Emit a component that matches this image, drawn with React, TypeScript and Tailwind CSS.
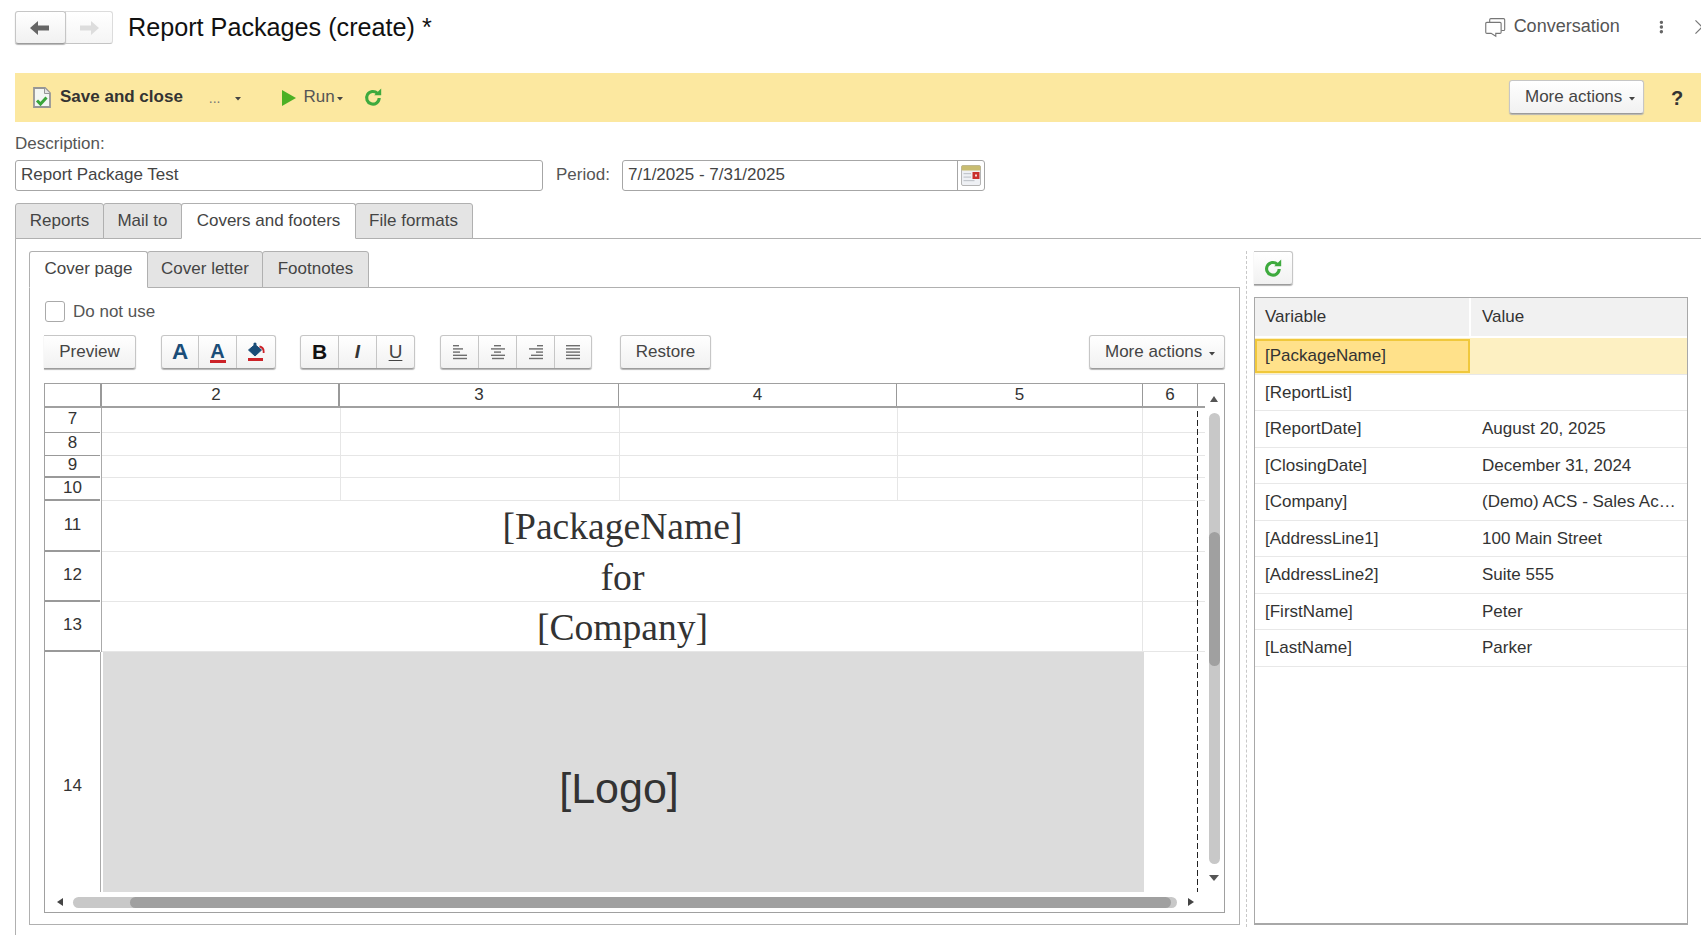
import React from "react";

const btn = "bg-linear-to-b from-white to-[#f1f1f1] border border-[#c6c6c6] border-b-[#9c9c9c] shadow-[0_1px_1px_#b5b5b5] rounded-[3px]";

function Caret({ className = "", color = "#444" }: { className?: string; color?: string }) {
  return (
    <svg width="6" height="4" viewBox="0 0 6 4" className={className}>
      <polygon points="0,0 6,0 3,3.5" fill={color} />
    </svg>
  );
}

function Refresh() {
  return (
    <svg width="18" height="19" viewBox="0 0 18 19">
      <path d="M13.4 5.4A6.3 6.3 0 1 0 15.2 10" fill="none" stroke="#3eaa3e" strokeWidth="3.1" />
      <polygon points="10.2,7.2 17.2,7.2 17.2,0.4" fill="#3eaa3e" />
    </svg>
  );
}

function Align({ lines }: { lines: [number, number][] }) {
  return (
    <svg width="18" height="16" viewBox="0 0 18 16">
      {lines.map(([x, w], i) => (
        <rect key={i} x={x} y={1 + i * 3.2} width={w} height="1.4" fill="#6e6e6e" />
      ))}
    </svg>
  );
}

function Tab({ label, active, w, h }: { label: string; active?: boolean; w: string; h: string }) {
  return (
    <div
      className={`${w} ${h} relative -mb-px flex items-center justify-center rounded-t-[3px] border border-[#b0b0b0] ${
        active ? "border-b-white bg-white z-10" : "bg-[#e4e4e4]"
      } -ml-px first:ml-0`}
    >
      {label}
    </div>
  );
}

const rowHeads = [
  { n: "7", h: "h-[25px]", b: "border-b" },
  { n: "8", h: "h-[22.5px]", b: "border-b" },
  { n: "9", h: "h-[22.5px]", b: "border-b-2" },
  { n: "10", h: "h-[23px]", b: "border-b-2" },
];

function PlainRow({ n, h, b }: { n: string; h: string; b: string }) {
  return (
    <div className={`flex ${h}`}>
      <div className={`w-[55px] ${b} border-[#999] flex items-center justify-center pb-[2px]`}>{n}</div>
      <div className="w-[2px] border-r border-[#aaa]" />
      <div className="flex border-b border-[#e6e6e6] flex-1">
        <div className="w-[239px] border-r border-[#e6e6e6]" />
        <div className="w-[279px] border-r border-[#e6e6e6]" />
        <div className="w-[278px] border-r border-[#e6e6e6]" />
        <div className="w-[245px] border-r border-[#e6e6e6]" />
      </div>
    </div>
  );
}

function BigRow({ n, h, text }: { n: string; h: string; text: string }) {
  return (
    <div className={`flex ${h}`}>
      <div className="w-[55px] border-b-2 border-[#999] flex items-center justify-center pb-[2px]">{n}</div>
      <div className="w-[2px] border-r border-[#aaa]" />
      <div className="flex border-b border-[#e6e6e6] flex-1">
        <div className="w-[1041px] border-r border-[#e6e6e6] flex items-center justify-center [font-family:'Liberation_Serif',serif] text-[37.6px] leading-none pt-[2px] pl-[1px] text-[#333]">
          {text}
        </div>
      </div>
    </div>
  );
}

const vars: [string, string][] = [
  ["[ReportList]", ""],
  ["[ReportDate]", "August 20, 2025"],
  ["[ClosingDate]", "December 31, 2024"],
  ["[Company]", "(Demo) ACS - Sales Ac…"],
  ["[AddressLine1]", "100 Main Street"],
  ["[AddressLine2]", "Suite 555"],
  ["[FirstName]", "Peter"],
  ["[LastName]", "Parker"],
];

export default function App() {
  return (
    <div className="w-[1701px] h-[935px] overflow-hidden bg-white text-[#444] text-[17px] [font-family:'Liberation_Sans',Arial,sans-serif]">
      {/* top */}
      <div className="h-[73px] flex items-start pl-[15px] pt-[11px]">
        <div className="flex h-[33px]">
          <div className={`${btn} w-[51px] h-full flex items-center justify-center pr-[1px] relative z-10`}>
            <svg width="20" height="14" viewBox="0 0 20 14">
              <polygon points="0,7 8,0 8,4.5 19,4.5 19,9.5 8,9.5 8,14" fill="#666" />
            </svg>
          </div>
          <div className="-ml-px w-[48px] h-full flex items-center justify-center bg-linear-to-b from-white to-[#f5f5f5] border border-[#dcdcdc] border-b-[#c4c4c4] rounded-r-[3px]">
            <svg width="20" height="14" viewBox="0 0 20 14">
              <polygon points="20,7 12,0 12,4.5 1,4.5 1,9.5 12,9.5 12,14" fill="#ddd" />
            </svg>
          </div>
        </div>
        <div className="ml-[15px] h-[33px] flex items-center text-[25.2px] text-[#111]">Report Packages (create) *</div>
        <div className="ml-auto h-[32px] flex items-center w-[216px]">
          <svg width="22" height="21" viewBox="0 0 22 21" fill="none" stroke="#777" strokeWidth="1.2">
            <path d="M5 5V2.2Q5 1 6.2 1H19.8Q21 1 21 2.2V12.5Q21 13.7 19.8 13.7H17.4" />
            <path d="M2 5H16Q17.2 5 17.2 6.2V15.5Q17.2 16.7 16 16.7H11.5V19.8L6.5 16.7H2Q0.8 16.7 0.8 15.5V6.2Q0.8 5 2 5Z" />
          </svg>
          <span className="ml-[8px] pb-[2px] text-[18px] text-[#555]">Conversation</span>
          <svg width="5" height="14" viewBox="0 0 5 14" className="ml-[39px]">
            <circle cx="2.5" cy="2" r="1.8" fill="#666" />
            <circle cx="2.5" cy="7" r="1.8" fill="#666" />
            <circle cx="2.5" cy="12" r="1.8" fill="#666" />
          </svg>
          <svg width="6" height="16" viewBox="0 0 6 16" className="ml-[32px]">
            <path d="M0.5 1L7.5 8L0.5 15" fill="none" stroke="#777" strokeWidth="1.3" />
          </svg>
        </div>
      </div>

      {/* yellow bar */}
      <div className="ml-[15px] h-[49px] bg-[#fce8a0] flex items-center pl-[18px] text-[#444]">
        <svg width="18" height="21" viewBox="0 0 18 21">
          <path d="M1 1H12L17 6V20H1Z" fill="#f3f6f3" stroke="#969696" strokeWidth="1.8" />
          <path d="M11.5 1V6.5H17" fill="#e4e4e4" stroke="#969696" strokeWidth="1" />
          <path d="M4 13.5L7.5 17L13.5 10.5" fill="none" stroke="#3aa53a" strokeWidth="3" />
        </svg>
        <span className="ml-[9px] pb-[2px] font-bold text-[#333]">Save and close</span>
        <span className="ml-[26px] text-[#777] text-[14px] pt-[2px]">...</span>
        <Caret className="ml-[14px] mt-[2px]" />
        <svg width="14" height="16" viewBox="0 0 14 16" className="ml-[41px] mt-[1px]">
          <polygon points="0,0 14,8 0,16" fill="#4cb024" />
        </svg>
        <span className="ml-[8px] pb-[2px] text-[#555]">Run</span>
        <Caret className="ml-[2px] mt-[2px]" />
        <div className="ml-[21px] -mt-[1px] flex">
          <Refresh />
        </div>
        <div className={`${btn} ml-auto w-[135px] h-[34px] flex items-center pl-[15px] gap-[7px] -mt-[1px]`}>
          <span>More actions</span>
          <Caret className="mt-[3px]" />
        </div>
        <span className="ml-[27px] mr-[18px] w-[12px] font-bold text-[#333] text-[20px]">?</span>
      </div>

      {/* form */}
      <div className="ml-[15px] mt-[11px] h-[22px] flex items-center text-[#555]">Description:</div>
      <div className="ml-[15px] mt-[5px] flex items-center h-[31px]">
        <div className="w-[528px] h-full border border-[#a6a6a6] rounded-[3px] flex items-center pl-[5px] pb-[1px]">Report Package Test</div>
        <div className="ml-[13px] w-[66px] text-[#555] pb-[1px]">Period:</div>
        <div className="w-[363px] h-full border border-[#a6a6a6] rounded-[3px] flex items-center">
          <div className="w-[335px] h-full border-r border-[#a6a6a6] flex items-center pl-[5px] pb-[1px]">7/1/2025 - 7/31/2025</div>
          <div className="flex-1 flex items-center justify-center">
            <svg width="20" height="21" viewBox="0 0 20 21">
              <rect x="0.5" y="0.5" width="19" height="20" rx="1.5" fill="#eef0f4" stroke="#b5b5b5" />
              <rect x="0.5" y="0.5" width="19" height="5" rx="1" fill="#c8bc70" />
              <rect x="11.5" y="7" width="7" height="7" fill="#c9302c" />
              <rect x="14" y="9.5" width="2" height="2" fill="#f5d6d6" />
              <rect x="2.5" y="8" width="7.5" height="1.2" fill="#c2c6cc" />
              <rect x="2.5" y="11.5" width="7.5" height="1.2" fill="#c2c6cc" />
              <rect x="2.5" y="15" width="11" height="1.2" fill="#c2c6cc" />
            </svg>
          </div>
        </div>
      </div>

      {/* tabs */}
      <div className="ml-[15px] mt-[12px] flex h-[35px]">
        <Tab label="Reports" w="w-[89px]" h="h-[36px]" />
        <Tab label="Mail to" w="w-[79px]" h="h-[36px]" />
        <Tab label="Covers and footers" active w="w-[175px]" h="h-[36px]" />
        <Tab label="File formats" w="w-[118px] pr-[1px]" h="h-[36px]" />
      </div>

      <div className="ml-[15px] h-[697px] border-l border-t border-[#b0b0b0] flex pl-[13px] pt-[12px]">
        {/* left */}
        <div className="w-[1211px] flex flex-col">
          <div className="flex h-[36px]">
            <Tab label="Cover page" active w="w-[119px]" h="h-[37px] pb-[2px]" />
            <Tab label="Cover letter" w="w-[116px]" h="h-[37px] pb-[2px]" />
            <Tab label="Footnotes" w="w-[107px]" h="h-[37px] pb-[2px]" />
          </div>
          <div className="h-[638px] border border-[#b0b0b0] pl-[14px] pr-[14px] pt-[13px]">
            <div className="flex items-center h-[21px] pl-[1px]">
              <div className="w-[20px] h-[21px] border border-[#aaa] rounded-[3px]" />
              <span className="ml-[8px] text-[#555]">Do not use</span>
            </div>
            <div className="mt-[13px] flex h-[34px]">
              <div className={`${btn} border-l-0 rounded-l-none w-[92px] flex items-center justify-center`}>Preview</div>
              <div className={`${btn} ml-[25px] flex w-[115px]`}>
                <div className="w-[37px] flex items-center justify-center border-r border-[#c6c6c6] font-bold text-[22.5px] text-[#1a4d78]">A</div>
                <div className="w-[38px] flex flex-col items-center justify-center border-r border-[#c6c6c6] font-bold text-[20px] leading-[18px] text-[#1a4d78]">
                  A<div className="w-[16px] h-[3px] bg-[#cc2228]" />
                </div>
                <div className="flex-1 flex items-center justify-center">
                  <svg width="18" height="20" viewBox="0 0 18 20">
                    <circle cx="8" cy="2" r="1.6" fill="#1a4d78" />
                    <path d="M8 2.5L14.5 8L8 14L1.5 8Z" fill="#1a4d78" stroke="#1a4d78" strokeLinejoin="round" />
                    <path d="M12.5 4.5Q17.2 5.5 16.6 11" fill="none" stroke="#cc2228" strokeWidth="1.8" />
                    <rect x="1" y="16" width="15" height="3" fill="#cc2228" />
                  </svg>
                </div>
              </div>
              <div className={`${btn} ml-[24px] flex w-[115px] text-[#111]`}>
                <div className="w-[38px] flex items-center justify-center border-r border-[#c6c6c6] font-bold text-[21px]">B</div>
                <div className="w-[38px] flex items-center justify-center border-r border-[#c6c6c6] italic font-bold text-[19px] text-[#333]">I</div>
                <div className="flex-1 flex items-center justify-center underline underline-offset-2 text-[19px] text-[#444]">U</div>
              </div>
              <div className={`${btn} ml-[25px] flex w-[152px]`}>
                <div className="w-[38px] flex items-center justify-center border-r border-[#c6c6c6]">
                  <Align lines={[[2, 6], [2, 10], [2, 7], [2, 14], [2, 14]]} />
                </div>
                <div className="w-[38px] flex items-center justify-center border-r border-[#c6c6c6]">
                  <Align lines={[[5, 7], [2, 14], [5, 7], [2, 14], [3, 12]]} />
                </div>
                <div className="w-[38px] flex items-center justify-center border-r border-[#c6c6c6]">
                  <Align lines={[[10, 6], [2, 14], [9, 7], [4, 12], [2, 14]]} />
                </div>
                <div className="flex-1 flex items-center justify-center">
                  <Align lines={[[2, 14], [2, 14], [2, 14], [2, 14], [2, 14]]} />
                </div>
              </div>
              <div className={`${btn} ml-[28px] w-[91px] flex items-center justify-center`}>Restore</div>
              <div className={`${btn} ml-auto w-[136px] flex items-center pl-[15px] gap-[7px]`}>
                <span>More actions</span>
                <Caret className="mt-[3px]" />
              </div>
            </div>

            {/* grid */}
            <div className="mt-[14px] w-[1181px] h-[530px] border border-[#a0a0a0] flex flex-col text-[#333]">
              <div className="flex h-[508px]">
                <div className="w-[1160px] flex flex-col">
                  <div className="flex h-[24px] border-b-2 border-[#a0a0a0]">
                    <div className="w-[57px] border-r-2 border-[#999]" />
                    <div className="w-[238px] border-r-2 border-[#999] flex items-center justify-center pr-[8px]">2</div>
                    <div className="w-[279px] border-r border-[#999] flex items-center justify-center">3</div>
                    <div className="w-[278px] border-r border-[#999] flex items-center justify-center">4</div>
                    <div className="w-[246px] border-r border-[#999] flex items-center justify-center">5</div>
                    <div className="w-[55px] border-r border-[#999] flex items-center justify-center">6</div>
                  </div>
                  <div className="relative h-[484px] flex flex-col">
                    {rowHeads.map((r) => (
                      <PlainRow key={r.n} {...r} />
                    ))}
                    <BigRow n="11" h="h-[51px]" text="[PackageName]" />
                    <BigRow n="12" h="h-[50px]" text="for" />
                    <BigRow n="13" h="h-[50px]" text="[Company]" />
                    <div className="flex h-[240px]">
                      <div className="w-[55px] flex items-center justify-center pt-[28px]">14</div>
                      <div className="w-[1px] border-r border-[#aaa]" />
                      <div className="ml-[2px] w-[1041px] h-[240px] bg-[#dcdcdc] flex items-center justify-center text-[43px] pr-[9px] pt-[32px] leading-none">
                        [Logo]
                      </div>
                    </div>
                    <div className="absolute left-[1151.5px] top-[3px] bottom-0 w-px bg-[repeating-linear-gradient(to_bottom,#222_0,#222_6px,transparent_6px,transparent_9px)]" />
                  </div>
                </div>
                <div className="w-[19px] flex flex-col items-center pr-[1px] pt-[12px]">
                  <svg width="8" height="6" viewBox="0 0 8 6"><polygon points="4,0 8,6 0,6" fill="#555" /></svg>
                  <div className="mt-[11px] w-[11px] h-[451px] bg-[#c8c8c8] rounded-full">
                    <div className="mt-[119px] h-[134px] bg-[#a0a0a0] rounded-full" />
                  </div>
                  <svg width="10" height="6" viewBox="0 0 10 6" className="mt-[11px]"><polygon points="0,0 10,0 5,6" fill="#555" /></svg>
                </div>
              </div>
              <div className="h-[20px] flex items-center pl-[12px]">
                <svg width="6" height="8" viewBox="0 0 6 8"><polygon points="6,0 6,8 0,4" fill="#444" /></svg>
                <div className="ml-[10px] w-[1104px] h-[11px] bg-[#c8c8c8] rounded-full overflow-hidden">
                  <div className="ml-[57px] w-[1041px] h-full bg-[#a0a0a0] rounded-full" />
                </div>
                <svg width="6" height="8" viewBox="0 0 6 8" className="ml-[11px]"><polygon points="0,0 6,4 0,8" fill="#444" /></svg>
              </div>
            </div>
          </div>
        </div>

        {/* splitter */}
        <div className="ml-[6px] h-[676px] w-0 border-l border-dashed border-[#c8c8c8]" />

        {/* right */}
        <div className="ml-[7px] w-[434px] flex flex-col">
          <div className={`${btn} border-l-0 rounded-l-none w-[39px] h-[34px] flex items-center justify-center`}>
            <Refresh />
          </div>
          <div className="mt-[12px] h-[628px] border border-[#a8a8a8] border-b-2 text-[#333]">
            <div className="flex h-[40px] bg-[#f1f1f1] border-b-2 border-white">
              <div className="w-[216px] border-r-2 border-white flex items-center pl-[10px]">Variable</div>
              <div className="flex items-center pl-[11px]">Value</div>
            </div>
            <div className="flex h-[36.5px] bg-[#fdf0c2] border-b border-[#e8e8e8] pt-[1px]">
              <div className="w-[215px] h-[34px] bg-[#ffe18a] border-2 border-[#f0c83c] flex items-center pl-[8px]">[PackageName]</div>
            </div>
            {vars.map(([k, v]) => (
              <div key={k} className="flex h-[36.5px] items-center border-b border-[#e8e8e8]">
                <div className="w-[215px] pl-[10px]">{k}</div>
                <div className="pl-[12px] whitespace-nowrap">{v}</div>
              </div>
            ))}
          </div>
        </div>
      </div>
    </div>
  );
}
